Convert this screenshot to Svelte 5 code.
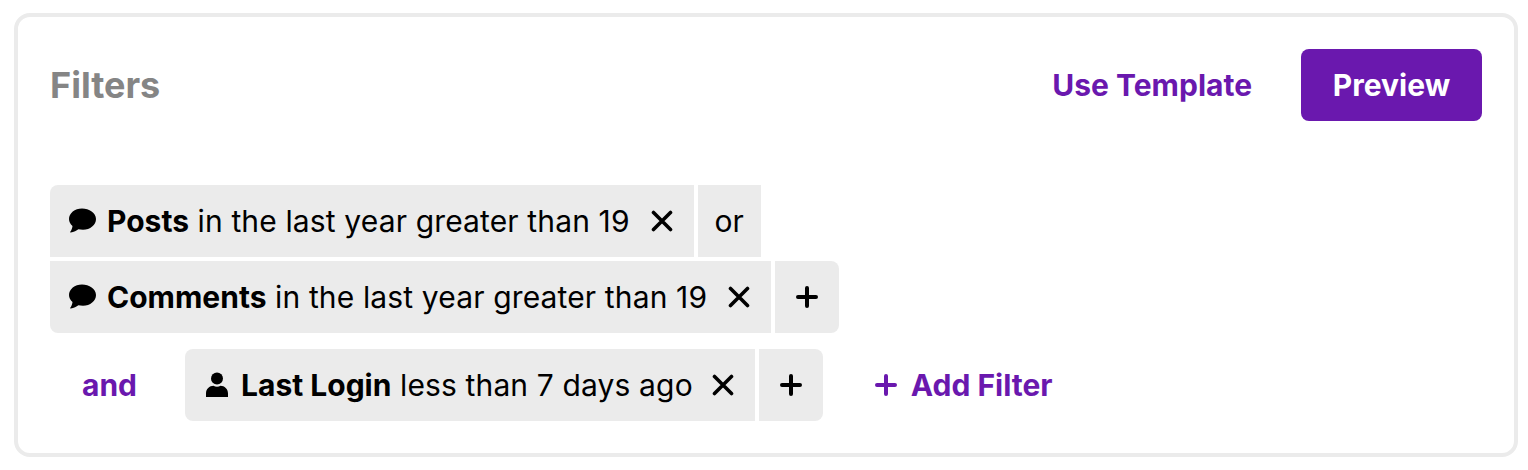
<script>
  const groups = [
    {
      conj: null,
      rows: [
        { icon: 'comment', name: 'Posts', rest: 'in the last year greater than 19', end: 'or' },
        { icon: 'comment', name: 'Comments', rest: 'in the last year greater than 19', end: '+' }
      ]
    },
    {
      conj: 'and',
      rows: [{ icon: 'user', name: 'Last Login', rest: 'less than 7 days ago', end: '+' }]
    }
  ];
</script>

{#snippet plus(size)}
  <svg class="plus" width={size} height={size} viewBox="0 0 22 22" aria-hidden="true">
    <path d="M11 2v18M2 11h18" fill="none" stroke="currentColor" stroke-width="4" stroke-linecap="round" />
  </svg>
{/snippet}

<div class="card">
  <header class="head">
    <h2>Filters</h2>
    <div class="actions">
      <button class="link">Use Template</button>
      <button class="primary">Preview</button>
    </div>
  </header>

  <div class="groups">
    {#each groups as group}
      <div class="group">
        {#if group.conj}
          <span class="conj">{group.conj}</span>
        {/if}
        <div class="rows">
          {#each group.rows as row}
            <div class="row">
              <div class="chip">
                {#if row.icon === 'comment'}
                  <svg class="icon" width="28" height="26" viewBox="0 0 28 26" aria-hidden="true">
                    <path d="M14 .5C6.800 .5 1 5.200 1 11c0 2.700 1.300 5.200 3.500 7-.2 2.200-1 4.200-2.200 5.700-.3.4 0 .9.500.8 3.100-.4 5.700-1.600 7.600-3.200 1.300.3 2.700.5 4.600.5 7.200 0 13-4.900 13-10.800S21.200 .5 14 .5z" fill="currentColor" />
                  </svg>
                {:else}
                  <svg class="icon user" width="22" height="26" viewBox="0 0 22 26" aria-hidden="true">
                    <circle cx="11" cy="6.600" r="6" fill="currentColor" />
                    <path d="M0 25v-3.500C0 17 3.500 13.800 7.500 13.800c1 .7 2.200 1 3.500 1s2.500-.3 3.500-1c4 0 7.500 3.200 7.500 7.700V25z" fill="currentColor" />
                  </svg>
                {/if}
                <span class="label"><b>{row.name}</b> {row.rest}</span>
                <svg class="close" width="22" height="22" viewBox="0 0 22 22" aria-hidden="true">
                  <path d="M2.500 2.500l17 17M19.500 2.500l-17 17" fill="none" stroke="currentColor" stroke-width="3.600" stroke-linecap="round" />
                </svg>
              </div>
              {#if row.end === 'or'}
                <div class="end or">or</div>
              {:else}
                <div class="end add">{@render plus(22)}</div>
              {/if}
            </div>
          {/each}
        </div>
        {#if group.conj}
          <button class="link add-filter">{@render plus(22)}<span>Add Filter</span></button>
        {/if}
      </div>
    {/each}
  </div>
</div>

<style>
  :global(body) {
    margin: 0;
    background: #fff;
  }

  .card {
    width: 1504px;
    height: 444px;
    margin: 13px 0 0 14px;
    padding: 32px;
    box-sizing: border-box;
    border: 4px solid #ebebeb;
    border-radius: 16px;
    font-family: Inter, "Liberation Sans", sans-serif;
    font-optical-sizing: none;
    font-size: 30px;
    line-height: 40px;
    color: #000;
  }

  .head {
    display: flex;
    align-items: center;
    justify-content: space-between;
    height: 72px;
    margin-bottom: 64px;
  }

  h2 {
    margin: 0;
    font-size: 36px;
    font-weight: 740;
    color: #858585;
  }

  .actions {
    display: flex;
    align-items: center;
    gap: 49px;
  }

  button {
    border: none;
    background: none;
    padding: 0;
    font: inherit;
    font-weight: 740;
    cursor: pointer;
  }

  .link {
    color: #6a18ae;
  }

  .primary {
    width: 181px;
    height: 72px;
    border-radius: 8px;
    background: #6a18ae;
    color: #fff;
  }

  .groups {
    display: flex;
    flex-direction: column;
    gap: 16px;
  }

  .group {
    display: flex;
    align-items: center;
  }

  .conj {
    width: 135px;
    padding-left: 32px;
    box-sizing: border-box;
    font-weight: 740;
    color: #6a18ae;
  }

  .rows {
    display: flex;
    flex-direction: column;
    gap: 4px;
  }

  .row {
    display: flex;
    gap: 4px;
    height: 72px;
  }

  .chip,
  .end {
    display: flex;
    align-items: center;
    background: #ebebeb;
  }

  .chip {
    padding: 0 21px 0 18px;
  }

  .chip b {
    font-weight: 740;
    letter-spacing: 0;
  }

  .row:first-child .chip {
    border-top-left-radius: 8px;
  }

  .row:last-child .chip {
    border-bottom-left-radius: 8px;
  }

  .icon {
    margin-right: 11px;
    flex: none;
  }

  .icon.user {
    margin-left: 3px;
    margin-right: 13px;
  }

  .label {
    white-space: pre;
    letter-spacing: 0.14px;
  }

  .close {
    margin-left: 21px;
    flex: none;
  }

  .group:last-child .close {
    margin-left: 19px;
  }

  .end {
    justify-content: center;
  }

  .or {
    width: 63px;
  }

  .add {
    width: 64px;
    border-radius: 0 8px 8px 0;
  }

  .add-filter {
    display: flex;
    align-items: center;
    gap: 14px;
    margin-left: 52px;
  }
</style>
